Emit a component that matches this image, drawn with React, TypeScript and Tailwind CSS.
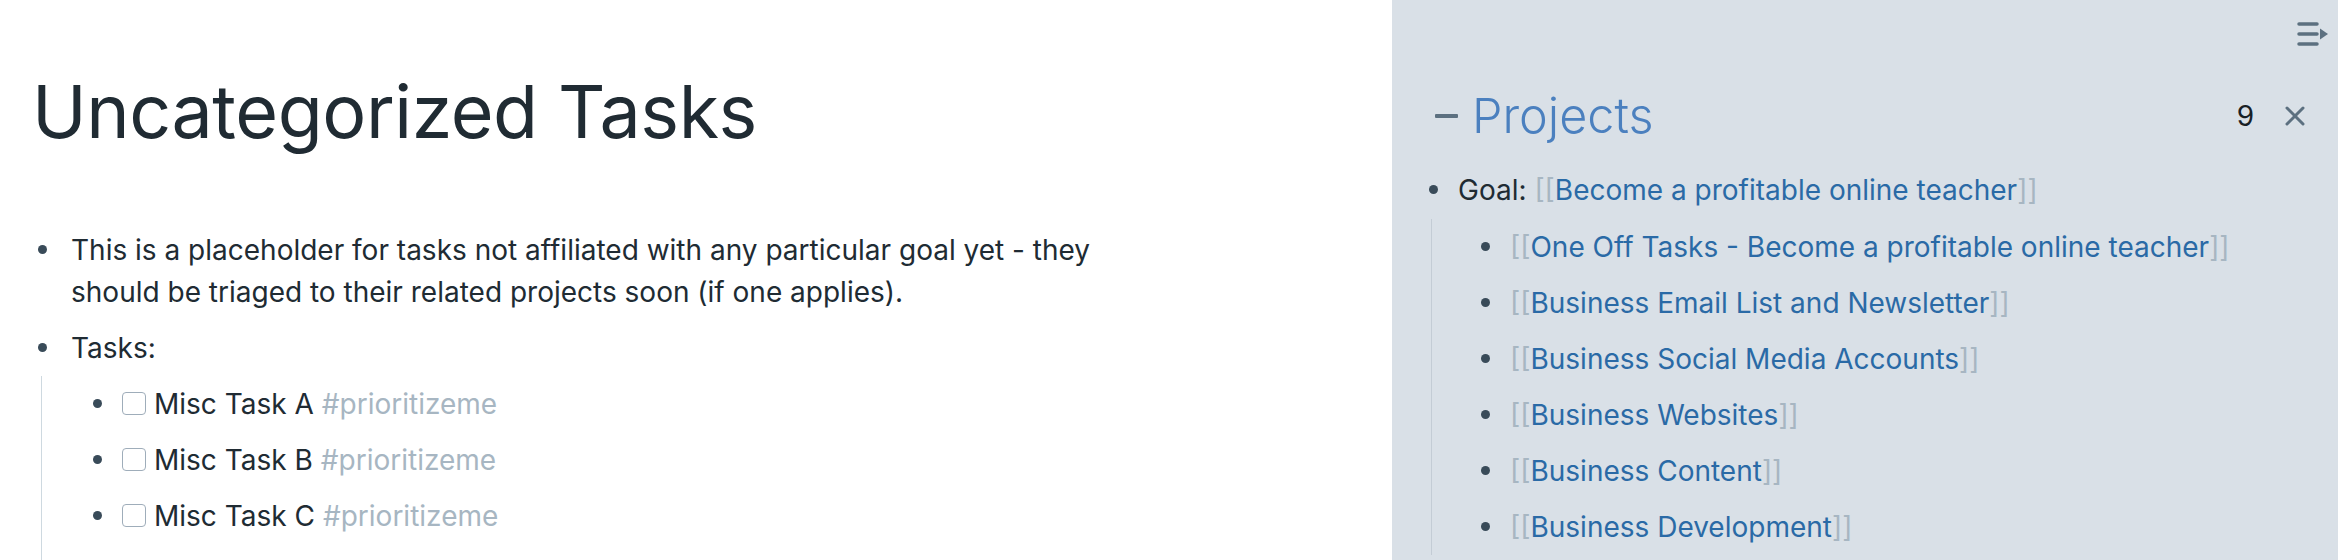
import type { ReactNode } from "react";

const font = { fontFamily: "Inter, 'Noto Sans', sans-serif" };

function Bullet() {
  return (
    <span className="flex h-[42px] w-[30px] shrink-0 items-center justify-center">
      <span className="h-[9px] w-[9px] rounded-full bg-[#394b59]" />
    </span>
  );
}

function Block({ children, gap }: { children: ReactNode; gap: string }) {
  return (
    <div className="flex py-[7px]">
      <Bullet />
      <div className={`${gap} min-w-0 flex-1 leading-[42px]`}>{children}</div>
    </div>
  );
}

function Task({ label }: { label: string }) {
  return (
    <Block gap="pl-[10px]">
      <span className="flex items-center">
        <span className="mr-[8px] inline-block h-[23px] w-[24px] rounded-[4px] border-[1.5px] border-[#9fadba] bg-white" />
        <span>{label}</span>
        <span className="ml-[8px] text-[#a7b6c2]">#prioritizeme</span>
      </span>
    </Block>
  );
}

function PageLink({ title }: { title: string }) {
  return (
    <span>
      <span className="text-[#a7b6c2]">[[</span>
      <span className="text-[#2a6aa6]">{title}</span>
      <span className="text-[#a7b6c2]">]]</span>
    </span>
  );
}

const projects = [
  "One Off Tasks - Become a profitable online teacher",
  "Business Email List and Newsletter",
  "Business Social Media Accounts",
  "Business Websites",
  "Business Content",
  "Business Development",
];

export default function App() {
  return (
    <div
      className="flex h-[560px] w-full overflow-hidden bg-white text-[28px] text-[#202b33]"
      style={font}
    >
      {/* main page */}
      <main className="w-[1392px] shrink-0 pl-[27px] pt-[75px]">
        <div className="w-[1115px]">
          <h1 className="ml-[5px] text-[73.5px] font-[430] leading-none tracking-[-0.006em] text-[#202b33]">
            Uncategorized Tasks
          </h1>
          <div className="mt-[73px]">
            <Block gap="pl-[14px]">
              This is a placeholder for tasks not affiliated with any particular goal yet - they
              should be triaged to their related projects soon (if one applies).
            </Block>
            <Block gap="pl-[14px]">Tasks:</Block>
            <div className="ml-[14px] border-l-[1.5px] border-[#ced9e0] pl-[40px]">
              <Task label="Misc Task A" />
              <Task label="Misc Task B" />
              <Task label="Misc Task C" />
              <div className="h-[40px]" />
            </div>
          </div>
        </div>
      </main>

      {/* right sidebar */}
      <aside className="flex-1 bg-[#d9e0e7]">
        <div className="flex justify-end pr-[9px] pt-[22px]">
          <svg width="32" height="24" viewBox="0 0 32 24">
            <g stroke="#5c7080" strokeWidth="3.5" strokeLinecap="round">
              <line x1="2" y1="2" x2="20" y2="2" />
              <line x1="2" y1="12" x2="20" y2="12" />
              <line x1="2" y1="22" x2="20" y2="22" />
            </g>
            <polygon points="23,6.5 31,12 23,17.5" fill="#5c7080" />
          </svg>
        </div>

        <div className="mt-[46px] flex items-center pl-[43px] pr-[32px]">
          <span className="mr-[14px] h-[4px] w-[23px] rounded-[1px] bg-[#5c7080]" />
          <span className="text-[48.5px] font-light leading-none text-[#4b80bf]">Projects</span>
          <span className="flex-1" />
          <span className="text-[28px] leading-none text-[#182026]">9</span>
          <svg className="ml-[30px]" width="22" height="22" viewBox="0 0 22 22">
            <g stroke="#5c7080" strokeWidth="3" strokeLinecap="round">
              <line x1="3" y1="3" x2="19" y2="19" />
              <line x1="19" y1="3" x2="3" y2="19" />
            </g>
          </svg>
        </div>

        <div className="mt-[21px] pl-[26px]">
          <Block gap="pl-[10px]">
            Goal: <PageLink title="Become a profitable online teacher" />
          </Block>
          <div className="ml-[13px] mt-[1px] border-l-[1.5px] border-[#c3ccd5] pl-[38px]">
            {projects.map((p) => (
              <Block key={p} gap="pl-[10px]">
                <PageLink title={p} />
              </Block>
            ))}
          </div>
        </div>
      </aside>
    </div>
  );
}
